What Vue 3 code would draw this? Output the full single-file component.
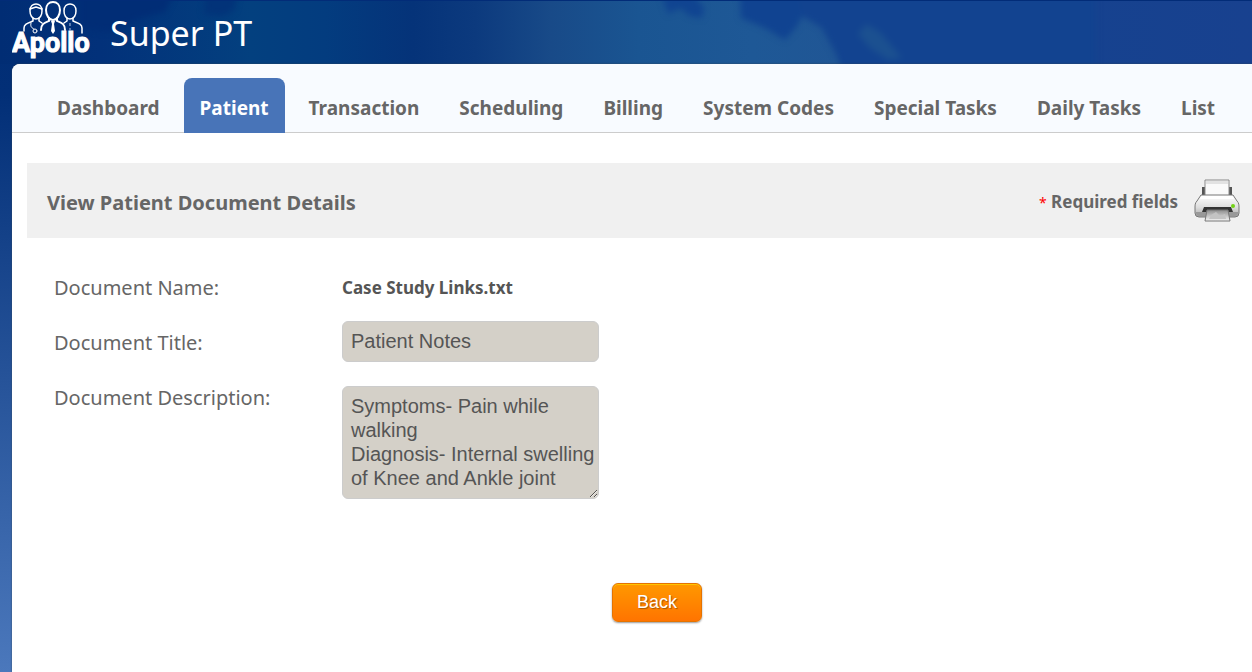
<template>
  <div class="page">
    <header class="banner">
      <svg class="sky" viewBox="0 0 1252 64" preserveAspectRatio="none" aria-hidden="true">
        <defs>
          <linearGradient id="skyBase" x1="0" x2="1" y1="0" y2="0">
            <stop offset="0" stop-color="#012d74" />
            <stop offset="0.08" stop-color="#02317a" />
            <stop offset="0.2" stop-color="#03407f" />
            <stop offset="0.26" stop-color="#033c7f" />
            <stop offset="0.33" stop-color="#053379" />
            <stop offset="0.38" stop-color="#0c3a7e" />
            <stop offset="0.44" stop-color="#184a88" />
            <stop offset="0.51" stop-color="#1a5592" />
            <stop offset="0.6" stop-color="#1e5896" />
            <stop offset="0.67" stop-color="#205695" />
            <stop offset="0.72" stop-color="#14438f" />
            <stop offset="1" stop-color="#18418f" />
          </linearGradient>
          <filter id="soft" x="-20%" y="-50%" width="140%" height="200%" color-interpolation-filters="sRGB">
            <feGaussianBlur stdDeviation="3" />
          </filter>
        </defs>
        <rect width="1252" height="64" fill="url(#skyBase)" />
        <g filter="url(#soft)">
          <path d="M80 -10h95l-10 22-25 6-30 14-30-4z" fill="#012d76" />
          <path d="M206 -10h32l-4 20-12 6-18-2z" fill="#023379" />
          <path d="M660 -10h30l14 18-2 10-12-2-10-8-12 6z" fill="#104491" />
          <path d="M740 -10h55l10 20-8 16-12 14-20-12-24-10z" fill="#104391" />
          <path d="M796 -10h300v90H846l-10-26-14-26-20-12z" fill="#124390" />
          <path d="M858 34l8-10 14 8 22 26-14 2-18-12z" fill="#1b5090" />
        </g>
        <rect width="1252" height="1" fill="#022c78" />
      </svg>
      <svg class="logo" width="82" height="60" viewBox="0 0 82 60" role="img" aria-label="Apollo">
        <g fill="none" stroke="#fff" stroke-width="1.5" stroke-linecap="round" stroke-linejoin="round">
          <path d="M18 11c0-5 3-7 6-7s6 2 6 7c0 4-2 8-6 8s-6-4-6-8z" />
          <path d="M18 9l6-2 6 2" />
          <path d="M52 11c0-5 3-7 6-7s6 2 6 7c0 4-2 8-6 8s-6-4-6-8z" />
          <path d="M12 31v-3c0-4 4-5 9-7v-3M27 18v3l3 2M55 18v3l-3 2M61 18v3c5 2 9 3 9 7v5" />
          <path d="M34 10c0-5 3-8 7-8s7 3 7 8c0 5-3 10-7 10s-7-5-7-10z" stroke-width="2" />
          <path d="M37 18v3c-5 2-8 3-8 9M45 18v3c5 2 8 3 8 9" stroke-width="2" />
          <path d="M19 23c-1 4 1 5 3 6m3 2a2 2 0 1 0-4 0 2 2 0 0 0 4 0" stroke-width="1" />
        </g>
        <path d="M39 21h4l-1 3 1 7-2 3-2-3 1-7z" fill="#fff" />
        <path d="M58 23v3M58 28v2" stroke="#b8c8e2" />
        <text x="0" y="52">Apollo</text>
      </svg>
      <span class="product">Super PT</span>
    </header>

    <main class="sheet">
      <nav class="tabs">
        <a
          v-for="tab in tabs"
          :key="tab"
          href="#"
          class="tab"
          :class="{ active: tab === current }"
          @click.prevent="current = tab"
        >{{ tab }}</a>
      </nav>

      <section class="title-bar">
        <h1>View Patient Document Details</h1>
        <p class="required"><span class="star">*</span> Required fields</p>
        <button class="print" type="button" aria-label="Print">
          <svg width="48" height="46" viewBox="0 0 48 46" aria-hidden="true">
            <defs>
              <linearGradient id="body" x1="0" x2="0" y1="0" y2="1">
                <stop offset="0" stop-color="#ffffff" />
                <stop offset="0.55" stop-color="#dedede" />
                <stop offset="1" stop-color="#a9a9a9" />
              </linearGradient>
              <linearGradient id="sheetOut" x1="0" x2="0" y1="0" y2="1">
                <stop offset="0" stop-color="#8d8d8d" />
                <stop offset="1" stop-color="#f5f5f5" />
              </linearGradient>
            </defs>
            <path d="M9 9h30v12H9z" fill="#555" />
            <path d="M12 2h24v18H12z" fill="#fafafa" stroke="#888" />
            <path d="M13 3h22v3H13z" fill="#e2e2e2" />
            <path d="M8 17h32l4 6c2 2 2 4 2 7v5q0 4-4 4H6q-4 0-4-4v-5c0-3 0-5 2-7z" fill="url(#body)" stroke="#777" />
            <path d="M9 18h30l2 3H7z" fill="#fff" />
            <path d="M3 34h42v1q0 3-3 3H6q-3 0-3-3z" fill="#999" />
            <path d="M11 29h27l2 5H9z" fill="#333" />
            <path d="M14 32h21l2 11H12z" fill="url(#sheetOut)" stroke="#777" />
            <path d="M18 37l5-3 4 4 5-2 1 5H16z" fill="#c3c3c3" />
            <circle cx="40" cy="28" r="2" fill="#73d216" />
          </svg>
        </button>
      </section>

      <form class="details" @submit.prevent>
        <span class="label">Document Name:</span>
        <strong class="file-name">Case Study Links.txt</strong>

        <label class="label beside-field" for="doc-title">Document Title:</label>
        <input id="doc-title" v-model="title" class="field" type="text" readonly />

        <label class="label" for="doc-description">Document Description:</label>
        <textarea id="doc-description" v-model="description" class="field area" rows="4" readonly></textarea>
      </form>

      <div class="actions">
        <button class="back" type="button">Back</button>
      </div>
    </main>
  </div>
</template>

<script setup>
import { ref } from 'vue'

const tabs = [
  'Dashboard',
  'Patient',
  'Transaction',
  'Scheduling',
  'Billing',
  'System Codes',
  'Special Tasks',
  'Daily Tasks',
  'List'
]

const current = ref('Patient')
const title = ref('Patient Notes')
const description = ref('Symptoms- Pain while walking\nDiagnosis- Internal swelling of Knee and Ankle joint')
</script>

<style>
body {
  margin: 0;
}
</style>

<style scoped>
.page {
  min-height: 100vh;
  box-sizing: border-box;
  display: flex;
  flex-direction: column;
  overflow: hidden;
  font-family: 'Segoe UI', 'Noto Sans', sans-serif;
  color: #666;
  background: linear-gradient(#012d74, #022f77 14%, #4b78bc);
}

.banner {
  position: relative;
  height: 64px;
  display: flex;
  gap: 16px;
  padding-left: 12px;
}

.sky {
  position: absolute;
  inset: 0;
  width: 100%;
  height: 100%;
}

.logo {
  position: relative;
  flex: none;
}

.logo text {
  font: bold 27px Roboto, sans-serif;
  fill: #fff;
  stroke: #fff;
}

.product {
  position: relative;
  font-size: 34px;
  line-height: 66px;
  color: #fff;
}

.sheet {
  flex: 1;
  margin-left: 12px;
  background: #fff;
  box-shadow: 0 0 2px #345;
  border-top-left-radius: 8px;
  position: relative;
}

.tabs {
  display: flex;
  gap: 8px;
  padding: 14px 0 0 29px;
  background: #f8fbff;
  border-bottom: 1px solid #ccc;
  border-top-left-radius: 8px;
}

.tab {
  box-sizing: border-box;
  height: 55px;
  margin-bottom: -1px;
  padding: 4px 16px 0;
  font-size: 19px;
  font-weight: bold;
  line-height: 52px;
  white-space: nowrap;
  text-decoration: none;
  color: #666;
  border-radius: 8px 8px 0 0;
}

.tab.active {
  color: #fff;
  background: #4874b8;
}

.title-bar {
  display: flex;
  align-items: center;
  height: 75px;
  margin: 30px 0 0 15px;
  padding: 0 11px 0 20px;
  background: #f0f0f0;
}

.title-bar h1 {
  flex: 1;
  margin: 0;
  padding-top: 4px;
  font-size: 20px;
  line-height: 28px;
}

.required {
  margin: 0 15px 0 0;
  padding-top: 2px;
  font-size: 17px;
  font-weight: bold;
}

.star {
  color: #f00;
  font-size: 14px;
  font-weight: normal;
}

.print {
  display: flex;
  padding: 0;
  border: 0;
  background: none;
  cursor: pointer;
}

.details {
  display: grid;
  grid-template-columns: 288px 257px;
  grid-template-rows: 45px 65px auto;
  align-items: start;
  padding: 38px 0 0 42px;
}

.label {
  font-size: 20px;
  line-height: 24px;
}

.beside-field {
  padding-top: 10px;
}

.file-name {
  font-size: 17px;
  line-height: 24px;
  color: #555;
}

.field {
  box-sizing: border-box;
  width: 100%;
  margin: 0;
  padding: 7px 0 8px 8px;
  font: 20px/24px 'Liberation Sans', Arial, sans-serif;
  color: #555;
  background: #d4d0c8;
  border: 1px solid #ccc;
  border-radius: 6px;
  outline: none;
}

.area {
  display: block;
  overflow: hidden;
  resize: both;
}

.actions {
  display: flex;
  justify-content: center;
  padding: 84px 0 48px 50px;
}

.back {
  width: 90px;
  height: 39px;
  padding: 0;
  font: 18px 'Liberation Sans', Arial, sans-serif;
  color: #fff;
  text-shadow: 1px 1px 1px #a65300;
  background: linear-gradient(#ff9800, #ff7400);
  border: 1px solid #e57300;
  border-radius: 6px;
  box-shadow: inset 0 1px 0 #ffc400, 0 1px 2px #999;
  cursor: pointer;
}
</style>
